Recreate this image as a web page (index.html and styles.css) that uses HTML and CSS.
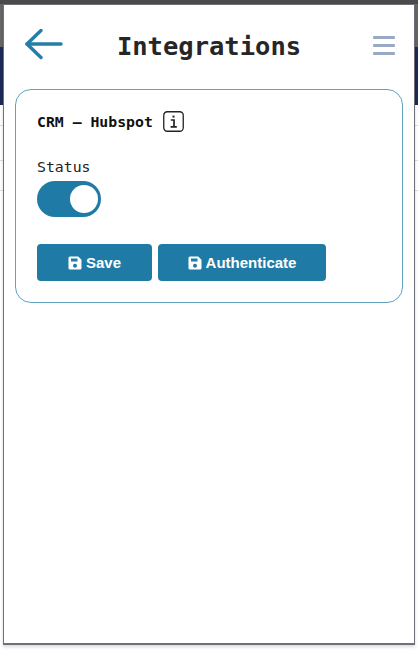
FILE: index.html
```html
<!DOCTYPE html>
<html lang="en">
<head>
  <meta charset="UTF-8">
  <title>Integrations</title>
  <meta name="viewport" content="width=device-width, initial-scale=1.0">
  <link rel="stylesheet" href="styles.css">
</head>
<body>
  <!-- strips of the page behind the popup -->
  <div class="backdrop" aria-hidden="true">
    <div class="backdrop-top"></div>
    <div class="backdrop-grey"></div>
    <div class="backdrop-navy"></div>
    <div class="backdrop-row row-short"></div>
    <div class="backdrop-row row-tall"></div>
    <div class="backdrop-row"></div>
  </div>

  <div class="popup">
    <header class="header">
      <a class="back" href="#" aria-label="Back">
        <svg width="40" height="32" viewBox="0 0 40 32" fill="none" stroke="currentColor" stroke-width="3.4" stroke-linecap="round" stroke-linejoin="round">
          <path d="M3 15H37"></path>
          <path d="M17 1.500L3 15L17 28.500"></path>
        </svg>
      </a>
      <h1 class="title">Integrations</h1>
      <button class="menu" type="button" aria-label="Menu">
        <span></span><span></span><span></span>
      </button>
    </header>

    <section class="card">
      <div class="card-title">
        <span>CRM – Hubspot</span>
        <svg class="info" width="21" height="21" viewBox="0 0 21 21" fill="none" stroke="#222" aria-label="Info">
          <rect x="0.75" y="0.75" width="19.5" height="19.5" rx="3.5" stroke-width="1.3"></rect>
          <path d="M10.5 4.6v2" stroke-width="2"></path>
          <path d="M7.8 9H11v6.6M7.6 15.8h6.2" stroke-width="1.7"></path>
        </svg>
      </div>

      <label class="field-label">Status</label>
      <div class="toggle"><span class="knob"></span></div>

      <div class="actions">
        <button class="btn btn-save" type="button">
          <svg class="save-icon" width="14" height="14" viewBox="0 0 14 14"><path fill-rule="evenodd" d="M2 .5h8.2L13.5 3.8V12a1.5 1.5 0 0 1-1.500 1.500H2A1.500 1.500 0 0 1 .5 12V2A1.500 1.500 0 0 1 2 .5zM3 2.500v3h6.500v-3zM7 7.700a2 2 0 1 0 0 4 2 2 0 0 0 0-4z"></path></svg>
          Save
        </button>
        <button class="btn btn-auth" type="button">
          <svg class="save-icon" width="14" height="14" viewBox="0 0 14 14"><path fill-rule="evenodd" d="M2 .5h8.2L13.5 3.8V12a1.5 1.5 0 0 1-1.500 1.500H2A1.500 1.500 0 0 1 .5 12V2A1.500 1.500 0 0 1 2 .5zM3 2.500v3h6.500v-3zM7 7.700a2 2 0 1 0 0 4 2 2 0 0 0 0-4z"></path></svg>
          Authenticate
        </button>
      </div>
    </section>
  </div>
</body>
</html>
```

FILE: styles.css
```css
/* Base */
*, *::before, *::after {
  box-sizing: border-box;
}
html, body {
  margin: 0;
  padding: 0;
  height: 100%;
  overflow: hidden;
  background: #fff;
  font-family: "DejaVu Sans Mono", monospace;
  color: #222;
}
body {
  position: relative;
}

/* Page behind the popup */
.backdrop {
  position: absolute;
  top: 0;
  left: 0;
  width: 100%;
  height: 100%;
  display: flex;
  flex-direction: column;
}
.backdrop-top {
  height: 4px;
  background: #4a4a4a;
}
.backdrop-grey {
  height: 43px;
  background: #666;
}
.backdrop-navy {
  height: 58px;
  background: #1c2a56;
}
.backdrop-row {
  height: 30px;
  border-bottom: 1px solid #ddd;
}
.row-short {
  height: 21px;
}
.row-tall {
  height: 35px;
}

/* Popup */
.popup {
  position: absolute;
  top: 4px;
  left: 3px;
  width: 412px;
  height: 641px;
  background: #fff;
  border: 1px solid #6d7078;
  border-bottom-width: 2px;
  box-shadow: 0 2px 3px rgba(0, 0, 0, 0.15);
  padding: 0 11px;
}

/* Header */
.header {
  display: flex;
  align-items: center;
  justify-content: space-between;
  height: 84px;
  padding: 0 8px 5px 9px;
}
.back {
  display: flex;
  color: #247fa8;
}
.title {
  margin: 3px 19px 0 0;
  font-size: 25.5px;
  font-weight: 700;
  color: #262626;
}
.menu {
  display: flex;
  flex-direction: column;
  gap: 5px;
  width: 22px;
  margin-top: 2px;
  padding: 0;
  border: 0;
  background: none;
}
.menu span {
  display: block;
  height: 3px;
  border-radius: 1px;
  background: #9aa9c4;
}

/* Card */
.card {
  height: 214px;
  padding: 21px 21px;
  border: 1px solid #5fa3c0;
  border-radius: 16px;
}
.card-title {
  display: flex;
  align-items: center;
  gap: 10px;
  font-size: 14.8px;
  font-weight: 700;
  color: #111;
}
.field-label {
  display: block;
  margin-top: 26px;
  font-size: 14.8px;
  line-height: 18px;
  color: #222;
}
.toggle {
  display: flex;
  justify-content: flex-end;
  align-items: center;
  width: 64px;
  height: 36px;
  margin-top: 5px;
  padding-right: 3px;
  border-radius: 18px;
  background: #1f7ba5;
}
.knob {
  width: 28px;
  height: 28px;
  border-radius: 50%;
  background: #fff;
}

/* Buttons */
.actions {
  display: flex;
  gap: 6px;
  margin-top: 27px;
}
.btn {
  display: flex;
  align-items: center;
  justify-content: center;
  gap: 4px;
  height: 37px;
  padding: 0;
  border: 0;
  border-radius: 4px;
  background: #1f7ba5;
  color: #fff;
  font-family: "Liberation Sans", Arial, sans-serif;
  font-size: 15px;
  font-weight: 700;
}
.btn-save {
  width: 115px;
}
.btn-auth {
  width: 168px;
}
.save-icon {
  fill: #fff;
}
```
